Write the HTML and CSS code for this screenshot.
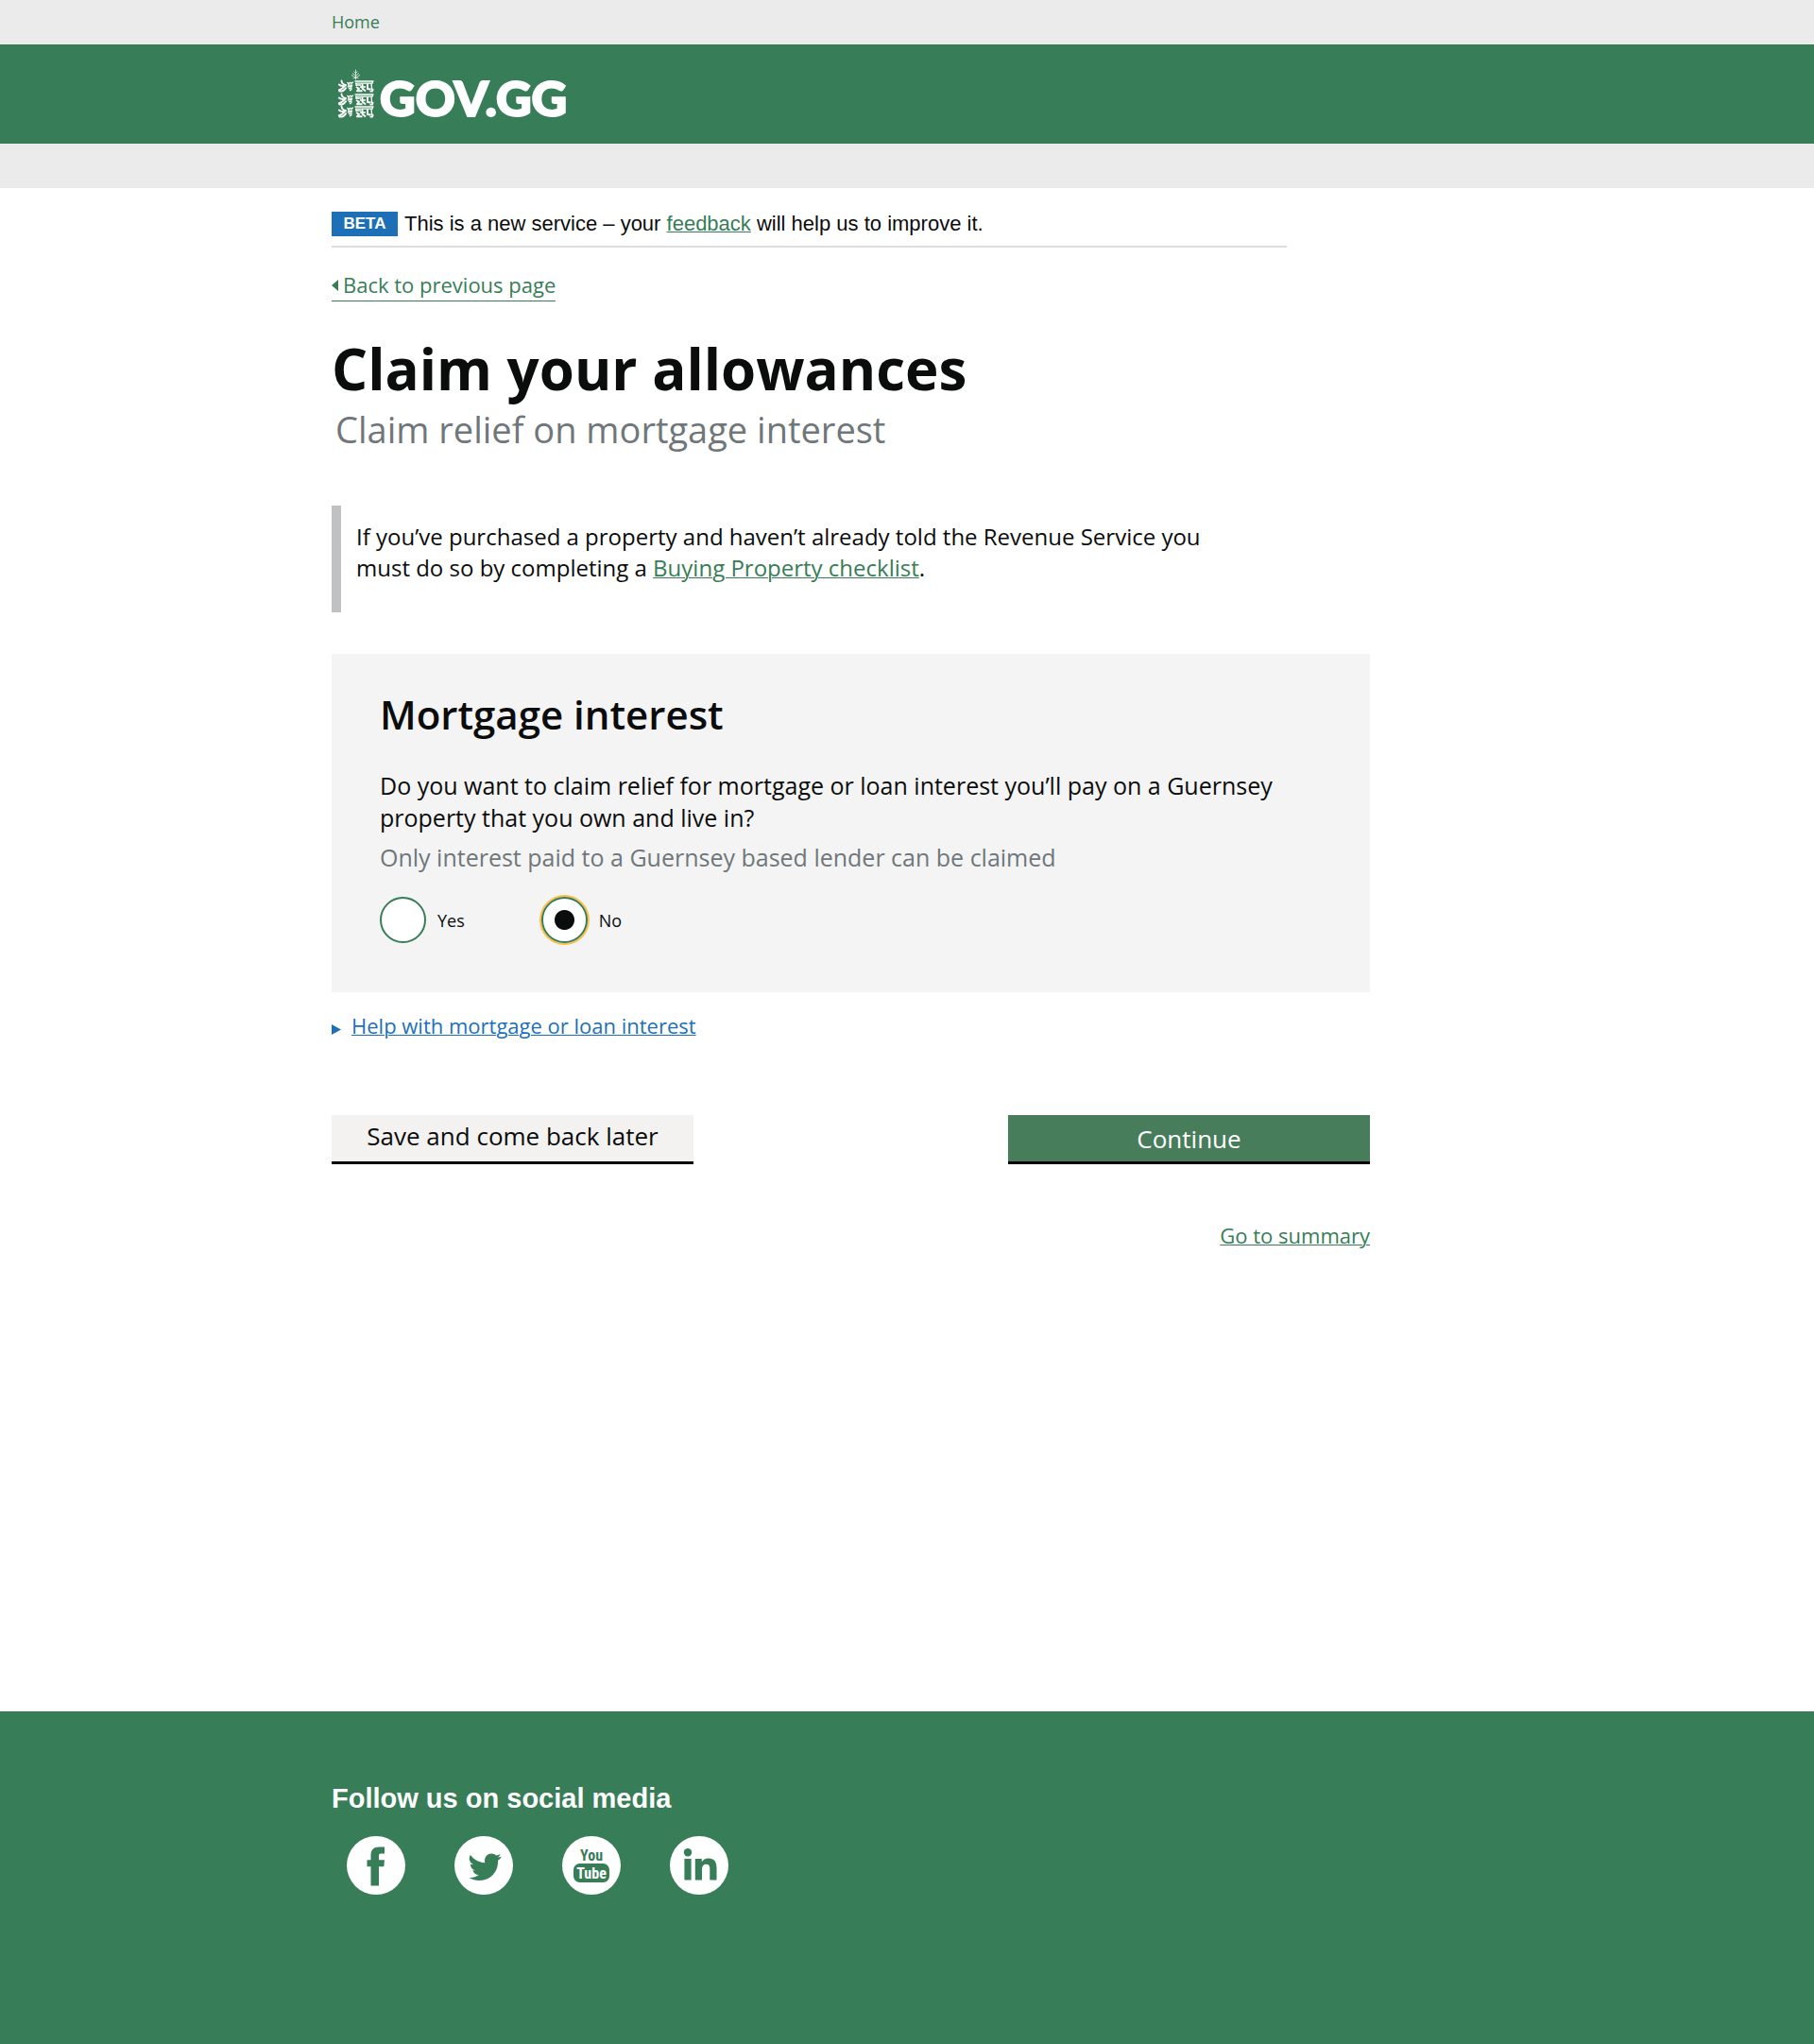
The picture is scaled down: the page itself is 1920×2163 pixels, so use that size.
FILE: index.html
```html
<!DOCTYPE html>
<html lang="en">
<head>
<meta charset="utf-8">
<meta name="viewport" content="width=device-width, initial-scale=1">
<title>Claim your allowances - GOV.GG</title>
<link rel="stylesheet" href="styles.css">
</head>
<body>
<nav class="topbar" aria-label="Site">
  <div class="container"><a class="topbar-link" href="#">Home</a></div>
</nav>
<header class="header">
  <div class="container">
    <a class="logo" href="#">
      <svg class="crest" viewBox="0 0 40 54" aria-hidden="true">
        <defs>
          <g id="lion" fill="none" stroke="#fff" stroke-linejoin="round">
            <path d="M3.500.5c.2 2.500 1.500 4 4.500 4.500M.8 4.500c2 1.800 4 2 7 1.200M.5 10.500c3-1 5-2.500 7-4.800M1.500 11.600c3 .4 5-1.200 6.500-3.400" stroke-width="1.900" stroke-linecap="round"/>
            <path d="M9.500 2l1.500 1.800 1.600-1.500 1.400 1 1.800-1.500M10 5.200h5.200M9.800 7l5-.6M11 8.800l3.600-.8M12 11l2.400-1.600" stroke-width="1.300"/>
            <path d="M17.500 1H37.500M18 3.200h18l.6-1.600M19 5h5M23 7h6M19 3v3M35 3l.6 6" stroke-width="1.300"/>
            <path d="M19 7l3 1.800-2 2.400h5.500M25.500 3.500v5l3.500 3M31 3.500v5.500l3 .5M34.500 9l2.200.8-.8 1.800h-2.400" stroke-width="1.900"/>
          </g>
        </defs>
        <path d="M18.500.5v11M16.500 2.500l2 2 2-2M15 4.500l3.500 2.500 3.500-2.500M14 6.500l4.500 2.500 4.500-2.500M15.500 10l3-1 3 1" fill="none" stroke="#fff" stroke-opacity=".7" stroke-width="1"/>
        <use href="#lion" y="12"/><use href="#lion" y="26"/><use href="#lion" y="39"/>
      </svg>
      <span class="logo-text">GOV.GG</span>
    </a>
  </div>
</header>
<div class="subbar"></div>

<main class="main container">
  <div class="phase-banner">
    <strong class="phase-tag">BETA</strong>
    <span>This is a new service – your <a class="link" href="#">feedback</a> will help us to improve it.</span>
  </div>

  <a class="back-link" href="#">
    <svg class="back-arrow" viewBox="0 0 7 12" aria-hidden="true"><path d="M7 0v12L0 6z" fill="currentColor"/></svg>
    Back to previous page
  </a>

  <h1 class="title">Claim your allowances</h1>
  <p class="subtitle">Claim relief on mortgage interest</p>

  <div class="inset">
    <p class="inset-text">If you’ve purchased a property and haven’t already told the Revenue Service you must do so by completing a <a class="link" href="#">Buying Property checklist</a>.</p>
  </div>

  <form class="form">
    <section class="card">
      <h2 class="card-title">Mortgage interest</h2>
      <p class="question" id="question">Do you want to claim relief for mortgage or loan interest you’ll pay on a Guernsey property that you own and live in?</p>
      <p class="hint" id="hint">Only interest paid to a Guernsey based lender can be claimed</p>
      <div class="radios" role="radiogroup" aria-labelledby="question" aria-describedby="hint">
        <div class="radio-item">
          <input class="radio" type="radio" name="claim" id="claim-yes" value="yes">
          <label for="claim-yes">Yes</label>
        </div>
        <div class="radio-item">
          <input class="radio" type="radio" name="claim" id="claim-no" value="no" checked>
          <label for="claim-no">No</label>
        </div>
      </div>
    </section>

    <div class="help">
      <svg class="help-arrow" viewBox="0 0 10 11" aria-hidden="true"><path d="M0 0v11l10-5.500z" fill="currentColor"/></svg>
      <a class="help-link" href="#">Help with mortgage or loan interest</a>
    </div>

    <div class="actions">
      <button class="button button-secondary" type="button">Save and come back later</button>
      <button class="button button-primary" type="submit">Continue</button>
    </div>
    <div class="summary"><a class="link" href="#">Go to summary</a></div>
  </form>
</main>

<footer class="footer">
  <div class="container">
    <h2 class="footer-title">Follow us on social media</h2>
    <div class="social">
      <a href="#" aria-label="Facebook"><svg class="social-icon" viewBox="0 0 62 62">
        <circle cx="31" cy="31" r="31" fill="#fff"/>
        <path d="M40 11.500v7h-3.800c-1.700 0-2.200.8-2.200 2.200v4.500h6l-.7 7H34v20.300h-8.500V32.200h-4v-7h4v-4.700c0-6 3-9 8.700-9z" fill="#377d57"/>
      </svg></a>
      <a href="#" aria-label="Twitter"><svg class="social-icon" viewBox="0 0 62 62">
        <circle cx="31" cy="31" r="31" fill="#fff"/>
        <path d="M49.500 22.200a14 14 0 0 1-3.400 3.500c.4 12.500-8 21.300-19.600 21.300-4 0-7.700-1-11-3 3.900.3 7.300-.7 10.300-2.900a7 7 0 0 1-6.500-4.800h3.100a7 7 0 0 1-5.500-6.900c1 .5 2 .8 3.100.8a7 7 0 0 1-3.100-10.300 21 21 0 0 0 15.300 8.300c-1-6 2.400-9.800 7-9.800 2 0 3.700.8 5 2.200 1.500-.3 3-.9 4.300-1.700-.5 1.600-1.500 2.800-2.900 3.700 1.400-.1 2.700-.5 3.900-1z" fill="#377d57"/>
      </svg></a>
      <a href="#" aria-label="YouTube"><svg class="social-icon" viewBox="0 0 62 62">
        <circle cx="31" cy="31" r="31" fill="#fff"/>
        <rect x="12" y="29" width="38" height="20" rx="6.500" fill="#377d57"/>
        <text class="yt" x="31" y="26" fill="#377d57">You</text>
        <text class="yt" x="31" y="45" fill="#fff">Tube</text>
      </svg></a>
      <a href="#" aria-label="LinkedIn"><svg class="social-icon" viewBox="0 0 62 62">
        <circle cx="31" cy="31" r="31" fill="#fff"/>
        <circle cx="19" cy="17.300" r="4.200" fill="#377d57"/>
        <path d="M15.400 24h7.200v22.500h-7.200zM26.800 24h7v3.200c1.500-2.500 3.800-3.800 7-3.800 6 0 8.700 3.500 8.700 10.300v12.800h-7.200V34.800c0-3.300-1-5-3.800-5-3 0-4.500 2-4.500 5.200v11.500h-7.200z" fill="#377d57"/>
      </svg></a>
    </div>
  </div>
</footer>
</body>
</html>
```
FILE: styles.css
```css
:root {
  --green: #377d57;
  --ink: #0b0c0c;
  --muted: #6f777b;
  --blue: #1d70b8;
  --bar: #ebebeb;
}

* { box-sizing: border-box; }

body {
  margin: 0;
  min-height: 100vh;
  display: flex;
  flex-direction: column;
  font-family: "Open Sans", sans-serif;
  font-size: 24px;
  line-height: 34px;
  color: var(--ink);
  background: #fff;
}

h1, h2, p { margin: 0; }

.container {
  width: 100%;
  max-width: 1218px;
  margin: 0 auto;
}

.link { color: var(--green); text-decoration-thickness: 1px; }

.topbar { background: var(--bar); font-size: 18px; line-height: 47px; }
.topbar-link { color: var(--green); text-decoration: none; }

.header { background: var(--green); padding: 26px 0 25px; }
.logo {
  display: flex;
  gap: 4px;
  padding-left: 7px;
  color: #fff;
  text-decoration: none;
}
.crest { width: 40px; height: 54px; }
.logo-text {
  height: 54px;
  font-family: Lato, sans-serif;
  font-weight: 900;
  font-size: 52px;
  line-height: 60px;
  -webkit-text-stroke: 2px #fff;
}
.subbar { background: var(--bar); height: 47px; }

.main { flex: 1; padding: 25px 0 60px; }

.phase-banner {
  display: flex;
  gap: 7px;
  max-width: 1011px;
  padding-bottom: 10px;
  border-bottom: 2px solid #dcdcdc;
  font-family: "Liberation Sans", sans-serif;
  font-size: 22px;
  line-height: 26px;
}
.phase-tag {
  width: 70px;
  text-align: center;
  font-size: 17px;
  color: #fff;
  background: var(--blue);
}

.back-link {
  display: inline-flex;
  align-items: center;
  gap: 5px;
  margin-top: 24px;
  padding-bottom: 2px;
  border-bottom: 1px solid;
  font-size: 22px;
  line-height: 30px;
  color: var(--green);
  text-decoration: none;
}
.back-arrow { width: 7px; height: 12px; margin-top: 2px; }

.title { margin-top: 38px; font-size: 60px; line-height: 66px; font-weight: 700; }
.subtitle { margin: 7px 0 0 4px; font-size: 38px; line-height: 48px; color: var(--muted); }

.inset {
  margin-top: 57px;
  padding: 16px 0 31px 16px;
  border-left: 10px solid #bfc1c3;
  line-height: 33px;
}
.inset-text { max-width: 920px; }

.form { max-width: 1099px; }
.card {
  margin-top: 44px;
  padding: 38px 51px 52px;
  background: #f4f4f4;
}
.card-title { font-size: 42px; line-height: 52px; font-weight: 600; }
.question { margin-top: 32px; font-size: 25px; }
.hint { margin-top: 8px; font-size: 25px; color: var(--muted); }

.radios { display: flex; gap: 81px; margin-top: 25px; font-size: 18px; }
.radio-item { display: flex; align-items: center; gap: 12px; }
.radio {
  appearance: none;
  width: 49px;
  height: 49px;
  margin: 0;
  border: 2px solid var(--green);
  border-radius: 50%;
  background: #fff;
}
.radio:checked {
  background: radial-gradient(circle, var(--ink) 10px, #fff 11px);
  box-shadow: 0 0 0 2px #ffbf47;
}

.help {
  display: flex;
  align-items: center;
  gap: 11px;
  margin-top: 20px;
  font-size: 22px;
  line-height: 30px;
  color: var(--blue);
}
.help-arrow { width: 10px; height: 11px; margin-top: 8px; }
.help-link { color: inherit; text-decoration-thickness: 1px; }

.actions { display: flex; justify-content: space-between; margin-top: 80px; }
.button {
  width: 383px;
  height: 52px;
  padding: 0 28px;
  border: 0;
  border-bottom: 3px solid #000;
  font: inherit;
  font-size: 26px;
  color: var(--ink);
  background: #f3f2f1;
}
.button-secondary { padding-bottom: 6px; }
.button-primary { color: #fff; background: #487d5b; }

.summary { margin-top: 60px; text-align: right; font-size: 22px; line-height: 30px; }

.footer { background: var(--green); padding: 74px 0 158px; color: #fff; }
.footer-title {
  font-family: "Liberation Sans", sans-serif;
  font-size: 29px;
  line-height: 36px;
  font-weight: 700;
}
.social { display: flex; gap: 52px; margin-top: 22px; padding-left: 16px; }
.social-icon { display: block; width: 62px; height: 62px; }
.yt {
  font-family: "Roboto Condensed", Roboto, sans-serif;
  font-weight: 700;
  font-size: 16px;
  text-anchor: middle;
}
```
